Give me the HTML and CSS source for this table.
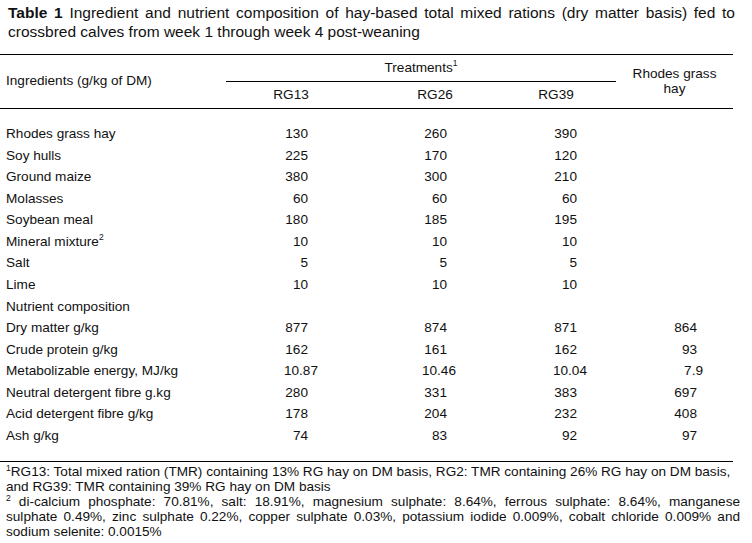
FILE: index.html
```html
<!DOCTYPE html>
<html>
<head>
<meta charset="utf-8">
<link rel="stylesheet" href="styles.css">
</head>
<body>
<div class="page">
  <p class="title"><b>Table 1</b> Ingredient and nutrient composition of hay-based total mixed rations (dry matter basis) fed to crossbred calves from week 1 through week 4 post-weaning</p>
  <table class="tbl">
    <colgroup>
      <col class="c0"><col class="c1"><col class="c2"><col class="c3"><col class="c4">
    </colgroup>
    <thead>
      <tr class="h1">
        <th rowspan="2" class="lab">Ingredients (g/kg of DM)</th>
        <th colspan="3" class="treat">Treatments<sup>1</sup></th>
        <th rowspan="2" class="rgh">Rhodes grass<br>hay</th>
      </tr>
      <tr class="h2">
        <th>RG13</th>
        <th class="rg26">RG26</th>
        <th>RG39</th>
      </tr>
    </thead>
    <tbody>
      <tr class="first"><td class="lab">Rhodes grass hay</td><td class="n1">130</td><td class="n2">260</td><td class="n3">390</td><td class="n4"></td></tr>
      <tr><td class="lab">Soy hulls</td><td class="n1">225</td><td class="n2">170</td><td class="n3">120</td><td class="n4"></td></tr>
      <tr><td class="lab">Ground maize</td><td class="n1">380</td><td class="n2">300</td><td class="n3">210</td><td class="n4"></td></tr>
      <tr><td class="lab">Molasses</td><td class="n1">60</td><td class="n2">60</td><td class="n3">60</td><td class="n4"></td></tr>
      <tr><td class="lab">Soybean meal</td><td class="n1">180</td><td class="n2">185</td><td class="n3">195</td><td class="n4"></td></tr>
      <tr><td class="lab">Mineral mixture<sup>2</sup></td><td class="n1">10</td><td class="n2">10</td><td class="n3">10</td><td class="n4"></td></tr>
      <tr><td class="lab">Salt</td><td class="n1">5</td><td class="n2">5</td><td class="n3">5</td><td class="n4"></td></tr>
      <tr><td class="lab">Lime</td><td class="n1">10</td><td class="n2">10</td><td class="n3">10</td><td class="n4"></td></tr>
      <tr><td class="lab">Nutrient composition</td><td class="n1"></td><td class="n2"></td><td class="n3"></td><td class="n4"></td></tr>
      <tr><td class="lab">Dry matter g/kg</td><td class="n1">877</td><td class="n2">874</td><td class="n3">871</td><td class="n4">864</td></tr>
      <tr><td class="lab">Crude protein g/kg</td><td class="n1">162</td><td class="n2">161</td><td class="n3">162</td><td class="n4">93</td></tr>
      <tr><td class="lab">Metabolizable energy, MJ/kg</td><td class="n1"><span class="dec">10.87</span></td><td class="n2"><span class="dec d9">10.46</span></td><td class="n3"><span class="dec">10.04</span></td><td class="n4"><span class="dec d6">7.9</span></td></tr>
      <tr><td class="lab">Neutral detergent fibre g.kg</td><td class="n1">280</td><td class="n2">331</td><td class="n3">383</td><td class="n4">697</td></tr>
      <tr><td class="lab">Acid detergent fibre g/kg</td><td class="n1">178</td><td class="n2">204</td><td class="n3">232</td><td class="n4">408</td></tr>
      <tr class="last"><td class="lab">Ash g/kg</td><td class="n1">74</td><td class="n2">83</td><td class="n3">92</td><td class="n4">97</td></tr>
    </tbody>
  </table>
  <div class="notes">
    <p class="note1"><sup>1</sup>RG13: Total mixed ration (TMR) containing 13% RG hay on DM basis, RG2: TMR containing 26% RG hay on DM basis, and RG39: TMR containing 39% RG hay on DM basis</p>
    <p class="note2"><sup>2</sup> di-calcium phosphate: 70.81%, salt: 18.91%, magnesium sulphate: 8.64%, ferrous sulphate: 8.64%, manganese sulphate 0.49%, zinc sulphate 0.22%, copper sulphate 0.03%, potassium iodide 0.009%, cobalt chloride 0.009% and sodium selenite: 0.0015%</p>
  </div>
</div>
</body>
</html>
```
FILE: styles.css
```css
html, body {
  margin: 0;
  padding: 0;
  background: #fff;
}
.page {
  width: 752px;
  font-family: "Liberation Sans", Arial, sans-serif;
  color: #111;
}
.title {
  margin: 0;
  padding: 4px 0 0 8px;
  width: 727px;
  font-size: 15.5px;
  line-height: 18.5px;
  text-align: justify;
}
.title b {
  font-weight: bold;
}
.tbl {
  margin-top: 13px;
  width: 733px;
  border-collapse: collapse;
  table-layout: fixed;
  font-size: 13.6px;
  border-top: 1px solid #000;
  border-bottom: 1px solid #000;
}
.c0 { width: 226px; }
.c1 { width: 130px; }
.c2 { width: 140px; }
.c3 { width: 120px; }
.c4 { width: 117px; }
.tbl th {
  font-weight: normal;
  padding: 0;
  vertical-align: middle;
  text-align: center;
  line-height: 14.5px;
}
.tbl thead {
  border-bottom: 1px solid #000;
}
.h1 th { height: 26px; }
.h2 th { height: 26px; }
.tbl th.lab {
  text-align: left;
  padding-left: 6px;
}
.treat {
  border-bottom: 1px solid #000;
}
.rg26 {
  padding-left: 18px !important;
}
sup {
  font-size: 8.5px;
  line-height: 0;
  vertical-align: 6px;
}
.tbl td {
  padding: 0;
  line-height: 21.57px;
  white-space: nowrap;
}
.tbl td.lab {
  padding-left: 6px;
}
.n1, .n2, .n3, .n4 { text-align: right; }
.tbl td.n1 { padding-right: 48px; }
.tbl td.n2 { padding-right: 49px; }
.tbl td.n3 { padding-right: 39px; }
.tbl td.n4 { padding-right: 36px; }
.tbl .first td { padding-top: 14px; }
.tbl .last td { padding-bottom: 15px; }
.dec {
  display: inline-block;
  margin-right: -10px;
}
.dec.d9 { margin-right: -9px; }
.dec.d6 { margin-right: -6px; }
.notes {
  width: 734px;
  padding: 2px 0 0 6px;
  font-size: 13.6px;
  line-height: 15px;
}
.notes p {
  margin: 0;
}
.note1 { text-align: left; }
.note2 { text-align: justify; }
.notes sup {
  font-size: 8.5px;
  vertical-align: 5px;
}
```
